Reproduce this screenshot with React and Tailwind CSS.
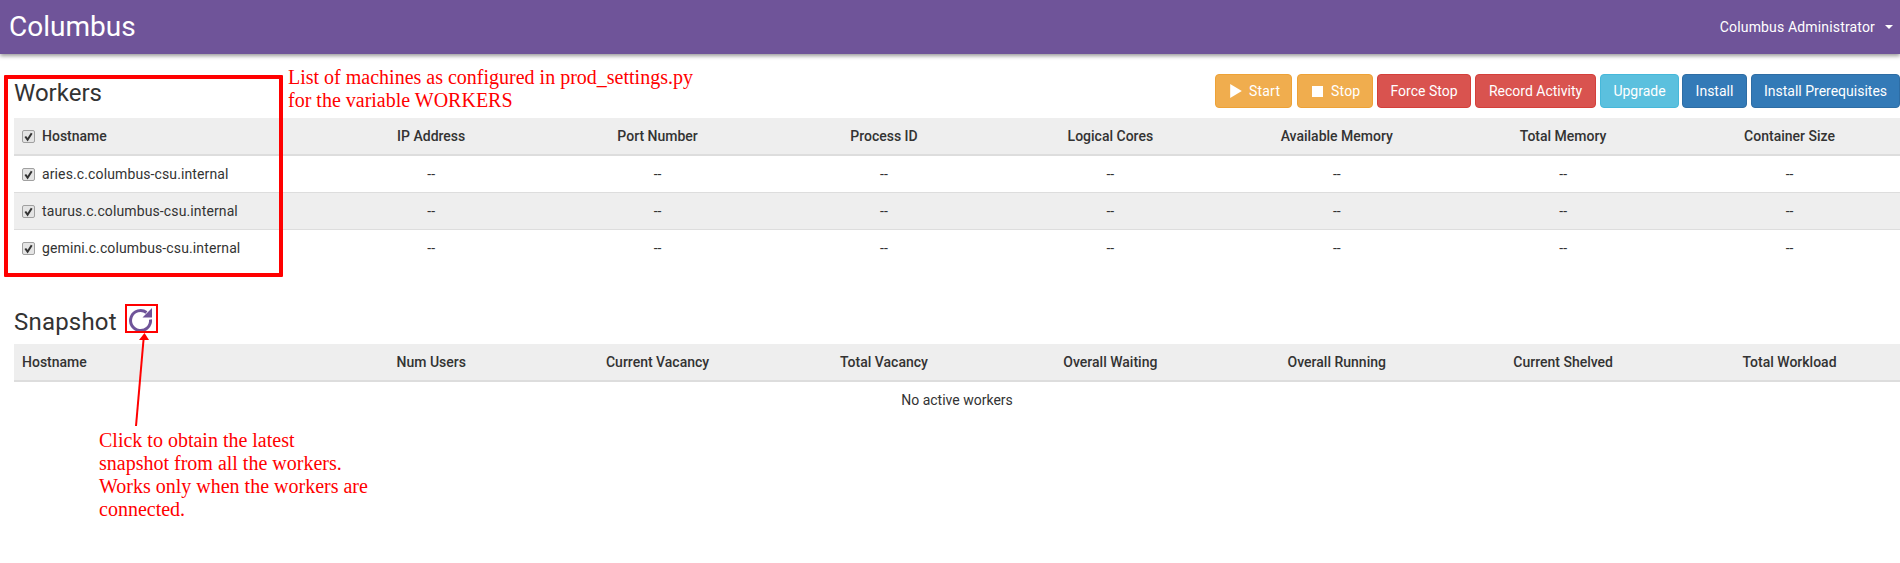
const workerColumns = ['IP Address', 'Port Number', 'Process ID', 'Logical Cores', 'Available Memory', 'Total Memory', 'Container Size'];
const snapshotColumns = ['Num Users', 'Current Vacancy', 'Total Vacancy', 'Overall Waiting', 'Overall Running', 'Current Shelved', 'Total Workload'];
const workers = ['aries.c.columbus-csu.internal', 'taurus.c.columbus-csu.internal', 'gemini.c.columbus-csu.internal'];

const gridCols = 'grid grid-cols-[304px_repeat(7,226.4px)]';

function Check() {
  return (
    <span className="flex h-[13px] w-[13px] shrink-0 items-center justify-center rounded-[2px] border border-[#a0a0a0] bg-[#e4e4e4]">
      <svg viewBox="0 0 12 12" className="h-[11px] w-[11px]">
        <path d="M2.5 6 L5 9.5 L9.5 2.5" fill="none" stroke="#333" strokeWidth="2.2" />
      </svg>
    </span>
  );
}

function Btn({ color, width, children }) {
  return (
    <button className={`flex h-[34px] items-center rounded-[4px] border text-[14px] text-white ${color} ${width}`}>
      {children}
    </button>
  );
}

function Annotation({ className, children }) {
  return (
    <div className={`absolute font-['Liberation_Serif',serif] text-[20px] leading-[23px] whitespace-nowrap text-[#ff0000] ${className}`}>
      {children}
    </div>
  );
}

export default function App() {
  return (
    <div className="relative h-[563px] overflow-hidden bg-white font-['Roboto',sans-serif] text-[14px] text-[#333]">
      <nav className="flex h-[54px] items-center justify-between bg-[#6f5499] pr-[7px] pl-[9px] text-white shadow-[0_2px_4px_rgba(0,0,0,0.4)]">
        <span className="text-[28px]">Columbus</span>
        <span className="flex items-center gap-[10px] text-[14px] tracking-[0.16px]">
          Columbus Administrator
          <span className="h-0 w-0 border-x-[4px] border-t-[4px] border-x-transparent border-t-white"></span>
        </span>
      </nav>

      <div className="pl-[14px]">
        <div className="flex h-[64px] items-start justify-between">
          <h2 className="mt-[24px] text-[24px] leading-[30px]">Workers</h2>
          <div className="mt-[20px] flex gap-[4px]">
            <Btn color="border-[#eea236] bg-[#f0ad4e]" width="w-[77px] gap-[7px] pl-[14px] tracking-[0.2px]">
              <svg viewBox="0 0 10 12" className="h-[14px] w-[12px] fill-white"><path d="M0 0 L10 6 L0 12 Z" /></svg>
              Start
            </Btn>
            <Btn color="border-[#eea236] bg-[#f0ad4e]" width="ml-[1px] w-[76px] gap-[8px] pl-[14px] tracking-[0.2px]">
              <span className="h-[11px] w-[11px] bg-white"></span>
              Stop
            </Btn>
            <Btn color="border-[#d43f3a] bg-[#d9534f]" width="w-[94px] justify-center">Force Stop</Btn>
            <Btn color="border-[#d43f3a] bg-[#d9534f]" width="w-[121px] justify-center">Record Activity</Btn>
            <Btn color="border-[#46b8da] bg-[#5bc0de]" width="w-[79px] justify-center">Upgrade</Btn>
            <Btn color="border-[#2e6da4] bg-[#337ab7]" width="-ml-[1px] w-[65px] justify-center">Install</Btn>
            <Btn color="border-[#2e6da4] bg-[#337ab7]" width="w-[149px] justify-center">Install Prerequisites</Btn>
          </div>
        </div>

        <div className={`${gridCols} h-[38px] items-center border-b-2 border-[#ddd] bg-[#eee] font-medium`}>
          <div className="flex items-center gap-[7px] pl-[8px]"><Check />Hostname</div>
          {workerColumns.map((c) => <div key={c} className="text-center">{c}</div>)}
        </div>
        {workers.map((w, i) => (
          <div key={w} className={`${gridCols} h-[37px] items-center border-b ${i === 2 ? 'border-transparent' : 'border-[#ddd]'} ${i === 1 ? 'bg-[#eee]' : ''}`}>
            <div className="flex items-center gap-[7px] pl-[8px] tracking-[0.12px]"><Check />{w}</div>
            {workerColumns.map((c) => <div key={c} className="text-center">--</div>)}
          </div>
        ))}

        <div className="mt-[38px] flex h-[39px] items-center">
          <h2 className="mb-[5px] text-[24px] leading-[30px] tracking-[0.2px]">Snapshot</h2>
          <svg viewBox="0 0 32 30" className="mb-[7px] ml-[7px] h-[30px] w-[32px]">
            <path d="M26.5 13.5 A10 10 0 1 1 22.5 6.5" fill="none" stroke="#6f5499" strokeWidth="3" />
            <path d="M28 2 L28 11.5 L18.5 11.5 Z" fill="#6f5499" />
          </svg>
        </div>
        <div className={`${gridCols} h-[38px] items-center border-b-2 border-[#ddd] bg-[#eee] font-medium`}>
          <div className="pl-[8px]">Hostname</div>
          {snapshotColumns.map((c) => <div key={c} className="text-center">{c}</div>)}
        </div>
        <div className="flex h-[37px] items-center justify-center">No active workers</div>
      </div>

      {/* annotations drawn over the page */}
      <div className="absolute top-[75px] left-[4px] h-[202px] w-[279px] rounded-[1px] border-[4px] border-[#ff0000]"></div>
      <div className="absolute top-[304px] left-[125px] h-[29px] w-[33px] border-[2px] border-[#ff0000]"></div>
      <svg className="absolute top-[330px] left-[130px] h-[100px] w-[24px]" viewBox="0 0 24 100">
        <path d="M6 96 L13.5 10" stroke="#ff0000" strokeWidth="2" fill="none" />
        <path d="M14.5 3 L19 10 L9 10 Z" fill="#ff0000" />
      </svg>
      <Annotation className="top-[66px] left-[288px]">
        List of machines as configured in prod_settings.py<br />for the variable WORKERS
      </Annotation>
      <Annotation className="top-[429px] left-[99px]">
        Click to obtain the latest<br />snapshot from all the workers.<br />Works only when the workers are<br />connected.
      </Annotation>
    </div>
  );
}
